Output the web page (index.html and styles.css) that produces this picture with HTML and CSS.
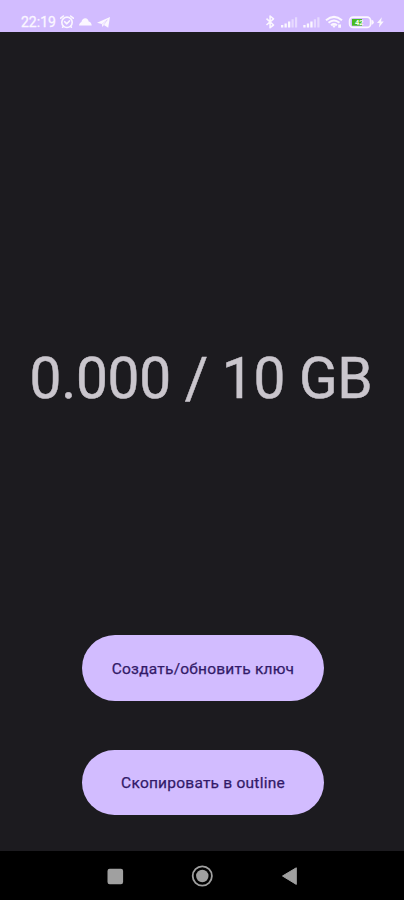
FILE: index.html
```html
<!DOCTYPE html>
<html lang="ru">
<head>
<meta charset="utf-8">
<title>GB</title>
<link rel="stylesheet" href="styles.css">
</head>
<body>
<div class="screen">
  <header class="status">
    <span class="clock">22:19</span>
    <svg class="notifications" width="55" height="16" viewBox="0 0 55 16">
      <g fill="none" stroke="#fbf7ff" stroke-width="1.6" stroke-linecap="round" stroke-linejoin="round">
        <circle cx="8" cy="8.3" r="5.2"/>
        <path d="M1.700 4.200 4.400 2M14.300 4.200 11.600 2M3.600 13.200 4.400 12.400M12.400 13.200 11.600 12.400M5.600 7.700 7.800 9.800 10.600 6.900"/>
      </g>
      <path fill="#fbf7ff" d="M20 11.600C20.200 9.200 21.400 8.400 22.400 7.900C23 5.400 24.600 4.200 26.300 4.300C28.300 4.400 29.300 5.900 29.700 7.600C31.800 8.200 32.600 9.700 32.700 11.600Z"/>
      <path fill="#fbf7ff" d="M38 8.800 51 3 49.200 13.700 44.900 10.900 43.400 12.900 42.800 9.900Z"/>
      <path fill="none" stroke="#d2bcff" stroke-width=".5" d="M43.200 10 48.300 5.800 44.800 10.900"/>
    </svg>
    <svg class="system" width="122" height="16" viewBox="0 0 122 16">
      <path fill="none" stroke="#fbf7ff" stroke-width="1.600" stroke-linejoin="round" d="M2.500 4.700 9.500 11 6.100 13.700V2L9.500 4.800 2.500 11"/>
      <g fill="#fbf7ff">
        <path d="M17 11h2.300v2.500H17zM20.500 9.500h2.300v4h-2.300zM24 7.500h2.300v6H24z"/>
        <path opacity=".5" d="M27.500 5.300h2.200v8.200h-2.200zM31 3.300h2.200v10.200H31z"/>
        <path d="M39.300 11h2.300v2.500h-2.300zM42.800 9.500h2.300v4h-2.300zM46.300 7.500h2.300v6h-2.300z"/>
        <path opacity=".5" d="M49.800 5.300H52v8.200h-2.200zM53.300 3.300h2.200v10.200h-2.200z"/>
      </g>
      <g fill="none" stroke="#fbf7ff" stroke-width="2">
        <path d="M62 6.300Q70-.5 78 6.300M64.500 8.800Q70 4.300 75.500 8.800M67 11.200Q70 8.800 73 11.200"/>
      </g>
      <path fill="#fbf7ff" d="M67.800 11.300h4.400L70 14ZM74.200 10.500H77v3.200h-2.800z"/>
      <rect x="85.600" y="3.200" width="21" height="10.200" rx="3.500" fill="none" stroke="#fbf7ff" stroke-width="1.700"/>
      <path fill="#fbf7ff" d="M107.500 5.800q2.300.3 2.300 2.500t-2.300 2.500z"/>
      <path fill="#47ba20" d="M88 5h10v6.700H88z"/>
      <text class="charge" x="91" y="11.200">42</text>
      <path fill="#fbf7ff" d="M117.800 3.200 113 9h2.600l-.7 4.600 4.800-6h-2.700z"/>
    </svg>
  </header>
  <main class="content">
    <h1 class="usage">0.000 / 10 GB</h1>
    <div class="actions">
      <button class="action">Создать/обновить ключ</button>
      <button class="action action-copy">Скопировать в outline</button>
    </div>
  </main>
  <nav class="navbar">
    <svg width="404" height="49" viewBox="0 0 404 49">
      <rect x="107.500" y="17.700" width="15.600" height="15.600" rx="2.200" fill="#a0a0a0"/>
      <circle cx="202.300" cy="25" r="9.600" fill="none" stroke="#a0a0a0" stroke-width="1.800"/>
      <circle cx="202.300" cy="25" r="6.200" fill="#a0a0a0"/>
      <path fill="#a0a0a0" stroke="#a0a0a0" stroke-linejoin="round" d="M282.500 25 296.300 16.800V33.400Z"/>
    </svg>
  </nav>
</div>
</body>
</html>
```
FILE: styles.css
```css
body {
  margin: 0;
  background: #1c1b1f;
  font-family: Roboto, "Noto Sans", sans-serif;
}

.screen {
  display: flex;
  flex-direction: column;
  height: 900px;
  overflow: hidden;
}

.status {
  display: flex;
  align-items: center;
  box-sizing: border-box;
  height: 32px;
  padding: 11px 18px 0 21px;
  background: #d2bcff;
  color: #fbf7ff;
}

.clock {
  width: 38px;
  font-size: 14px;
  line-height: 16px;
  white-space: nowrap;
  -webkit-text-stroke: 0.3px #fbf7ff;
}

.system {
  margin-left: auto;
}

.charge {
  font-size: 7.5px;
  font-weight: 700;
  fill: #f2ffe9;
}

.content {
  display: flex;
  flex: 1;
  flex-direction: column;
  align-items: center;
}

.usage {
  margin: 313px 2px 0 0;
  color: #cac6cd;
  font-size: 56.8px;
  font-weight: 400;
  letter-spacing: -0.25px;
  line-height: 68px;
  white-space: nowrap;
  -webkit-text-stroke: 0.5px #cac6cd;
}

.actions {
  display: grid;
  gap: 49px;
  margin: 222px 0 0 2px;
}

.action {
  width: 242px;
  height: 65.5px;
  padding: 2px 0 0;
  border: 0;
  border-radius: 33px;
  background: #d2bcff;
  color: #321a68;
  font: 400 15.5px/22px Roboto, "Noto Sans", sans-serif;
  letter-spacing: 0.23px;
  -webkit-text-stroke: 0.25px #321a68;
}

.navbar {
  height: 49px;
  background: #000;
}
```
